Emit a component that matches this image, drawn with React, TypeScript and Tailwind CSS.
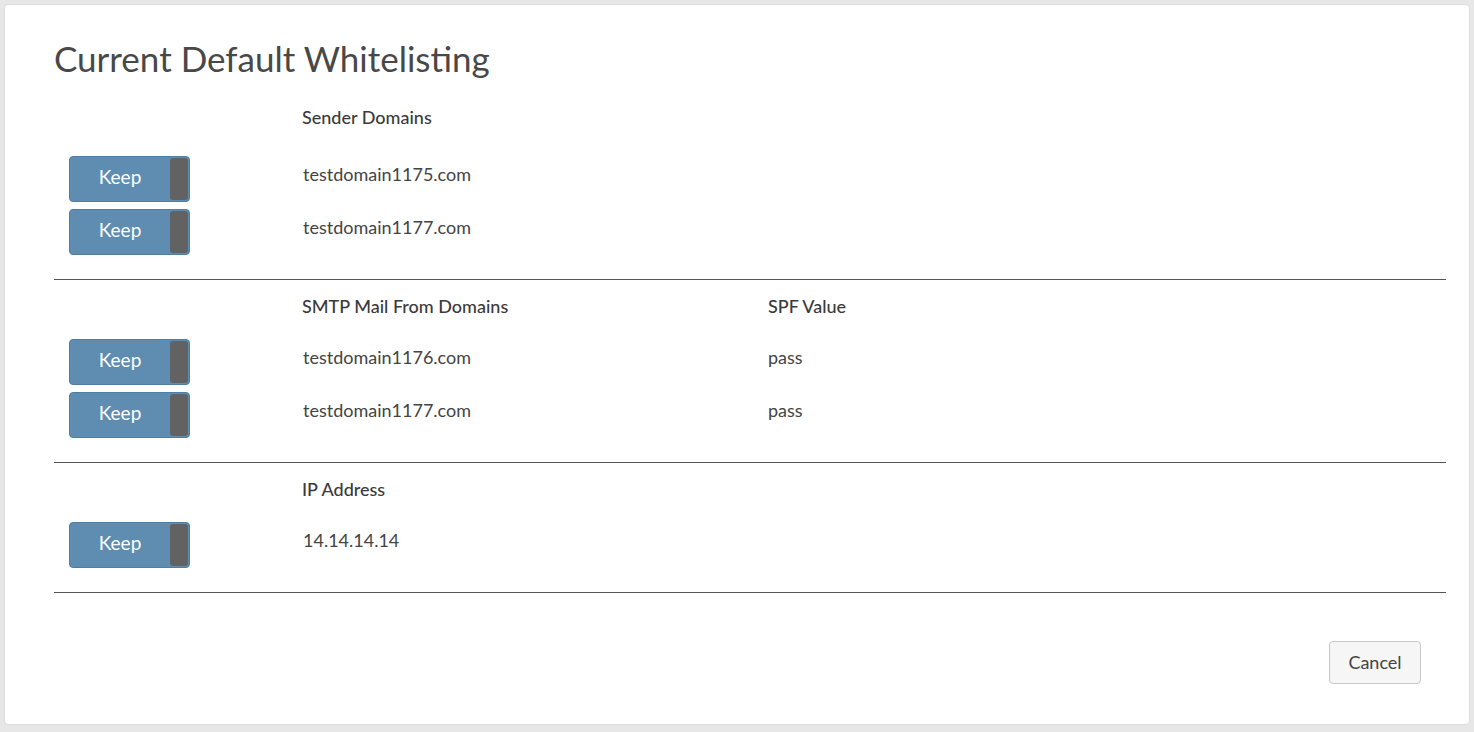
import React from "react";

type Row = { domain: string; spf?: string };

const KeepToggle: React.FC = () => (
	<button className="flex h-[46px] w-[121px] items-stretch rounded-[4px] border border-[#4f7ea2] bg-[#5e8db1] p-0">
		<span className="flex flex-1 items-center justify-center pb-[3px] text-[19px] text-white">
			Keep
		</span>
		<span className="my-[1px] mr-[1px] w-[18px] rounded-[3px] bg-[#626262]" />
	</button>
);

const Section: React.FC<{
	headers: string[];
	rows: Row[];
	headerGap: string;
}> = ({ headers, rows, headerGap }) => (
	<div className="border-b border-[#555] pb-[24px] pt-[14px]">
		<div className={`flex h-6 items-center ${headerGap}`}>
			<div className="w-[248px]" />
			<div className="w-[466px] text-[18px] font-medium text-[#3a3a3a]">
				{headers[0]}
			</div>
			{headers[1] && (
				<div className="text-[18px] font-medium text-[#3a3a3a]">
					{headers[1]}
				</div>
			)}
		</div>
		<div className="flex flex-col gap-[7px]">
			{rows.map((r, i) => (
				<div key={i} className="flex items-start">
					<div className="w-[248px] pl-[15px]">
						<KeepToggle />
					</div>
					<div className="w-[466px] pl-[1px] pt-[6px] text-[18px] leading-6 text-[#444]">
						{r.domain}
					</div>
					{r.spf && (
						<div className="pt-[6px] text-[18px] leading-6 text-[#444]">
							{r.spf}
						</div>
					)}
				</div>
			))}
		</div>
	</div>
);

export default function App() {
	return (
		<div
			className="min-h-[732px] bg-[#e7e7e7] px-1 pt-1"
			style={{ fontFamily: "Lato, 'Noto Sans', sans-serif" }}
		>
			<div className="h-[721px] rounded-[4px] border border-[#dcdcdc] bg-white pl-[49px] pr-[23px] pt-[34px]">
				<h1 className="mb-[14px] h-[38px] text-[35px] leading-[38px] text-[#484848]">
					Current Default Whitelisting
				</h1>
				<Section
					headerGap="mb-[27px]"
					headers={["Sender Domains"]}
					rows={[
						{ domain: "testdomain1175.com" },
						{ domain: "testdomain1177.com" },
					]}
				/>
				<Section
					headerGap="mb-[21px]"
					headers={["SMTP Mail From Domains", "SPF Value"]}
					rows={[
						{ domain: "testdomain1176.com", spf: "pass" },
						{ domain: "testdomain1177.com", spf: "pass" },
					]}
				/>
				<Section
					headerGap="mb-[21px]"
					headers={["IP Address"]}
					rows={[{ domain: "14.14.14.14" }]}
				/>
				<div className="flex justify-end pr-[25px] pt-[48px]">
					<button className="h-[43px] w-[92px] rounded-[4px] border border-[#c8c8c8] bg-[#f6f6f6] text-[18px] text-[#444]">
						Cancel
					</button>
				</div>
			</div>
		</div>
	);
}
